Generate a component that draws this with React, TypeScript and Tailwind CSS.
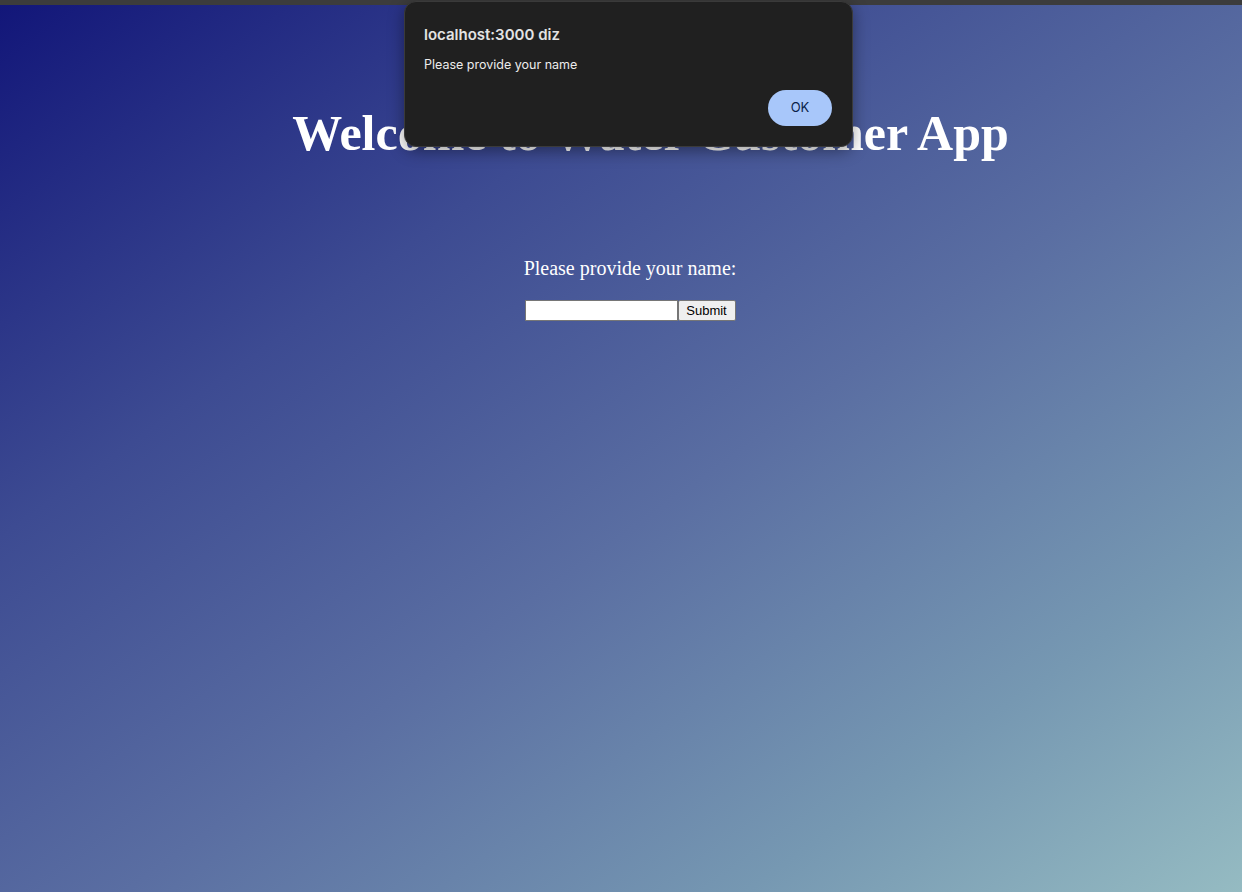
import React from "react";

export default function App() {
  return (
    <div className="relative h-[892px] w-full overflow-hidden bg-[#3c3c3c]">
      <div className="mt-[5px] h-[887px] w-full bg-[linear-gradient(to_bottom_right,#121679_0%,#3d4b92_30%,#5a6ea2_55%,#7698b2_80%,#95bbc2_100%)]">
        <div className="flex flex-col items-center pl-[59px] pt-[98px]">
          <h1 className="font-['Liberation_Serif',serif] text-[50px] font-bold leading-[60px] text-white">
            Welcome to Water Customer App
          </h1>
        </div>
        <div className="flex flex-col items-center pl-[18px] pt-[93px]">
          <p className="font-['Liberation_Serif',serif] text-[20px] leading-[24px] text-white">
            Please provide your name:
          </p>
          <form className="mt-[20px] flex items-stretch" onSubmit={(e) => e.preventDefault()}>
            <input
              type="text"
              className="h-[21px] w-[153px] border border-[#767676] bg-white px-1 text-[13px]"
            />
            <button
              type="submit"
              className="h-[21px] w-[58px] rounded-[2px] border border-[#767676] bg-[#efefef] font-['Liberation_Sans',Arial,sans-serif] text-[13px] leading-[18px] text-black"
            >
              Submit
            </button>
          </form>
        </div>
      </div>

      <div className="absolute left-[404px] top-[1px] h-[146px] w-[449px] rounded-[12px] border border-[#3a3a3a] bg-[#202020] font-['Inter','Liberation_Sans',sans-serif] shadow-[0_4px_16px_rgba(0,0,0,0.4)]">
        <div className="px-[19px] pt-[23px]">
          <div className="text-[15px] font-semibold leading-[20px] text-[#e3e3e3]">localhost:3000 diz</div>
          <div className="mt-[12px] text-[12.5px] leading-[16px] text-[#ececec]">Please provide your name</div>
        </div>
        <div className="flex justify-end px-[20px] pt-[17px]">
          <button className="h-[36px] w-[64px] rounded-full bg-[#a8c7fa] text-[13px] font-normal text-[#0b1f4a]">
            OK
          </button>
        </div>
      </div>
    </div>
  );
}
